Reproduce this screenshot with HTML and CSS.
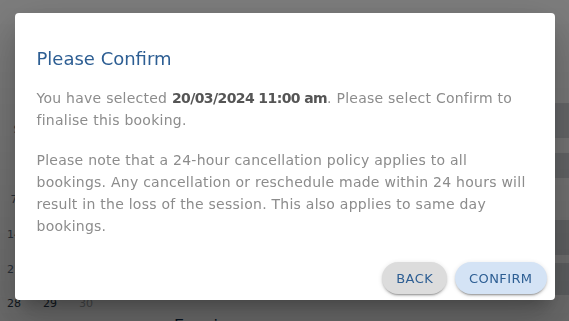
FILE: index.html
```html
<!DOCTYPE html>
<html lang="en">
<head>
<meta charset="utf-8">
<title>Please Confirm</title>
<link rel="stylesheet" href="styles.css">
</head>
<body>
<div class="page">
  <div class="calendar">
    <div class="week head"><span>S</span></div>
    <div class="week"><span></span></div>
    <div class="week"><span>7</span></div>
    <div class="week"><span>14</span></div>
    <div class="week"><span>21</span></div>
    <div class="week last"><span>28</span><span>29</span><span class="muted">30</span></div>
  </div>
  <div class="slots">
    <div class="slot s1"></div>
    <div class="slot s2"></div>
    <div class="slot s3"></div>
    <div class="slot s4"></div>
    <div class="slot-title">Evening</div>
  </div>
</div>

<div class="backdrop">
  <div class="dialog" role="dialog" aria-labelledby="dlg-title">
    <h2 id="dlg-title" class="dialog-title">Please Confirm</h2>
    <p class="dialog-text">You have selected <strong>20/03/2024 11:00 am</strong>. Please select Confirm to finalise this booking.</p>
    <p class="dialog-text">Please note that a 24-hour cancellation policy applies to all bookings. Any cancellation or reschedule made within 24 hours will result in the loss of the session. This also applies to same day bookings.</p>
    <div class="dialog-actions">
      <button class="btn btn-back">BACK</button>
      <button class="btn btn-confirm">CONFIRM</button>
    </div>
  </div>
</div>
</body>
</html>
```

FILE: styles.css
```css
html, body {
  margin: 0;
  padding: 0;
  height: 100%;
  overflow: hidden;
}

body {
  font-family: "DejaVu Sans", "Liberation Sans", sans-serif;
  background: #f6f6f6;
}

.page {
  display: flex;
  height: 321px;
  overflow: hidden;
}

.calendar {
  width: 150px;
  flex-shrink: 0;
  padding-top: 122px;
  display: flex;
  flex-direction: column;
  font-size: 11px;
  line-height: 16px;
  color: #5a6c80;
}

.week {
  height: 35px;
  flex-shrink: 0;
  display: flex;
  gap: 16px;
  padding-left: 4px;
}

.week span {
  width: 20px;
  text-align: center;
}

.week.head {
  padding-left: 7px;
}

.week.last {
  height: 16px;
  margin-top: -1px;
  color: #2a3a4c;
}

.week .muted {
  color: #a0a4a8;
}

.slots {
  flex: 1;
  padding-top: 103px;
  display: flex;
  flex-direction: column;
}

.slot {
  flex-shrink: 0;
  background: #d3d6d9;
}

.s1 { height: 35px; margin-bottom: 15px; }
.s2 { height: 25px; margin-bottom: 42px; }
.s3 { height: 35px; margin-bottom: 8px; }
.s4 { height: 32px; margin-bottom: 21px; }

.slot-title {
  flex-shrink: 0;
  margin-left: 24px;
  font-size: 16px;
  line-height: 20px;
  color: #0e2a4a;
}

.backdrop {
  position: fixed;
  inset: 0;
  background: linear-gradient(180deg, rgba(0,0,0,0.49), rgba(0,0,0,0.57));
  display: flex;
  justify-content: center;
  align-items: flex-start;
}

.dialog {
  margin-top: 13px;
  width: 540px;
  height: 287px;
  box-sizing: border-box;
  padding: 22px 22px 0 22px;
  background: #fff;
  border-radius: 4px;
  box-shadow: 0 11px 15px -7px rgba(0,0,0,0.2), 0 24px 38px 3px rgba(0,0,0,0.14), 0 9px 46px 8px rgba(0,0,0,0.12);
  display: flex;
  flex-direction: column;
}

.dialog-title {
  margin: 0;
  padding-top: 12px;
  font-size: 18px;
  font-weight: 400;
  line-height: 24px;
  color: #2d5e93;
}

.dialog-text {
  margin: 16px 0 0 0;
  font-size: 14px;
  line-height: 22px;
  letter-spacing: 0.25px;
  color: #8c8c8c;
}

.dialog-text + .dialog-text {
  margin-top: 18px;
}

.dialog-text strong {
  font-weight: 700;
  letter-spacing: -0.6px;
  color: #555;
}

.dialog-actions {
  margin-top: auto;
  margin-bottom: 6px;
  display: flex;
  justify-content: flex-end;
  gap: 8px;
  margin-right: -14px;
}

.btn {
  font-family: inherit;
  font-size: 13px;
  letter-spacing: 0.4px;
  height: 32px;
  border: none;
  border-radius: 16px;
  padding: 0 14px;
  color: #2d5e93;
  box-shadow: 0 3px 1px -2px rgba(0,0,0,0.2), 0 2px 2px 0 rgba(0,0,0,0.14), 0 1px 5px 0 rgba(0,0,0,0.12);
  cursor: pointer;
}

.btn-back {
  background: #dcdcdc;
}

.btn-confirm {
  background: #d4e3f5;
}
```
